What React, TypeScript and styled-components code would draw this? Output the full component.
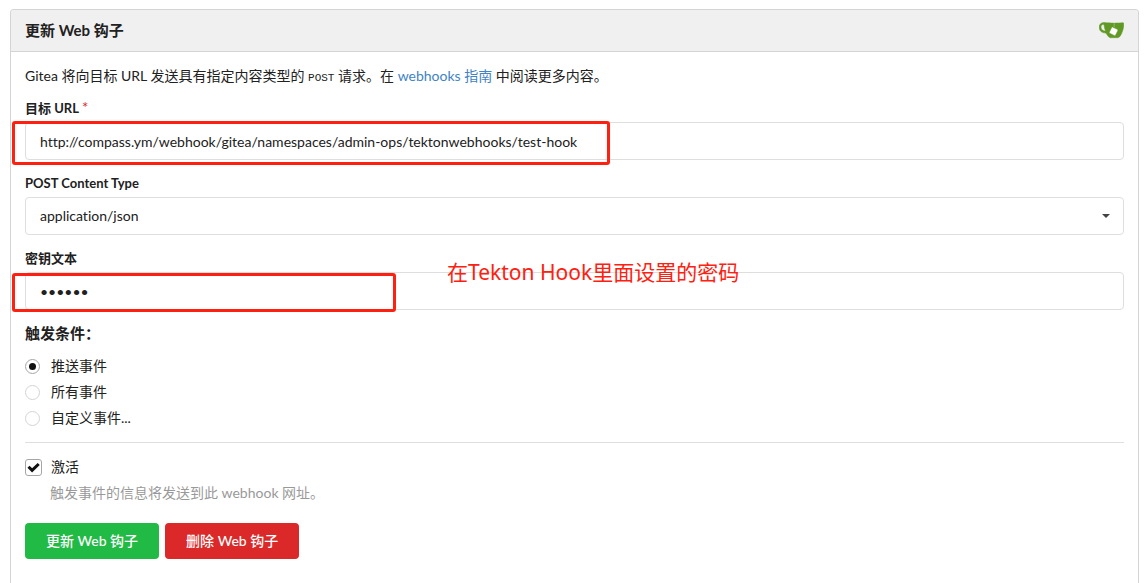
import React from "react";
import styled, { createGlobalStyle } from "styled-components";

const GlobalStyle = createGlobalStyle`
  *, *::before, *::after { box-sizing: border-box; }
  body {
    margin: 0;
    background: #fff;
    color: #212121;
    font-family: Lato, "Noto Sans CJK SC", sans-serif;
    font-size: 14px;
    font-variant-ligatures: none;
    line-height: 20px;
  }
  input, select, button { font: inherit; color: inherit; }
`;

const Page = styled.main`
  display: flex;
  flex-direction: column;
  min-height: 100vh;
  padding: 9px 7px 0 10px;
`;

const Card = styled.section`
  flex: 1;
  border: 1px solid #d4d4d5;
  border-bottom: 0;
  border-radius: 4px 4px 0 0;
`;

const CardHeader = styled.header`
  display: flex;
  align-items: center;
  justify-content: space-between;
  height: 42px;
  padding: 0 14px 2px;
  background: #f0f0f0;
  border-bottom: 1px solid #d4d4d5;
  border-radius: 3px 3px 0 0;
`;

const Title = styled.h1`
  margin: 0;
  font-size: 15px;
  font-weight: 700;
  line-height: 20px;
`;

const Logo = styled.svg`
  width: 25px;
  height: 25px;
`;

const Form = styled.form`
  padding: 14px;
`;

const Intro = styled.p`
  margin: 0 0 11px;
`;

const Code = styled.code`
  font-family: "Liberation Mono", monospace;
  font-size: 11px;
`;

const Link = styled.a`
  color: #4183c4;
  text-decoration: none;
`;

const Field = styled.div`
  margin-bottom: 14px;
`;

const Label = styled.label`
  display: block;
  margin-bottom: 4px;
  font-size: 13px;
  font-weight: 700;
  line-height: 19px;
`;

const Required = styled.span`
  margin-left: 3px;
  color: #db2828;
  font-size: 15px;
  font-weight: 400;
  line-height: 1;
`;

const Control = styled.div`
  position: relative;
`;

const Input = styled.input`
  display: block;
  width: 100%;
  height: 38px;
  padding: 0 14px;
  background: #fff;
  border: 1px solid #dededf;
  border-radius: 4px;
  outline: 0;
`;

const Select = styled.select`
  display: block;
  width: 100%;
  height: 38px;
  padding: 0 14px;
  appearance: none;
  background: #fff;
  border: 1px solid #dededf;
  border-radius: 4px;
`;

const Caret = styled.svg`
  position: absolute;
  top: 17px;
  right: 14px;
  width: 8px;
  height: 4px;
  pointer-events: none;
`;

const Highlight = styled.div<{ $width: number; $height: number; $top: number }>`
  position: absolute;
  top: ${(p) => p.$top}px;
  left: -13px;
  width: ${(p) => p.$width}px;
  height: ${(p) => p.$height}px;
  border: 3px solid #ff2010;
  border-radius: 3px;
  pointer-events: none;
`;

const Note = styled.span`
  position: absolute;
  top: -14px;
  left: 422px;
  color: #ff2010;
  font-family: "Noto Sans", "Noto Sans CJK SC", sans-serif;
  font-size: 21px;
  line-height: 28px;
  white-space: nowrap;
  pointer-events: none;
`;

const Events = styled.fieldset`
  margin: 0;
  padding: 0 0 14px;
  border: 0;
  border-bottom: 1px solid #dededf;
`;

const Legend = styled.legend`
  margin-bottom: 14px;
  padding: 0;
  font-size: 15px;
  font-weight: 700;
  line-height: 18px;
`;

const Option = styled.label`
  display: flex;
  align-items: center;
  gap: 11px;
  height: 20px;
  & + & { margin-top: 6px; }
`;

const Radio = styled.input`
  display: grid;
  place-content: center;
  width: 15px;
  height: 15px;
  margin: 0;
  appearance: none;
  background: #fff;
  border: 1px solid #d4d4d5;
  border-radius: 50%;
  &:checked { border-color: #a6a6a6; }
  &:checked::before {
    content: "";
    width: 7px;
    height: 7px;
    background: #111;
    border-radius: 50%;
  }
`;

const CheckRow = styled.label`
  display: flex;
  align-items: center;
  gap: 9px;
  height: 20px;
  margin-top: 14px;
`;

const CheckBox = styled.span`
  display: grid;
  width: 17px;
  height: 17px;
  & > * { grid-area: 1 / 1; }
`;

const Check = styled.input`
  width: 17px;
  height: 17px;
  margin: 0;
  appearance: none;
  background: #fff;
  border: 1px solid #a6a6a6;
  border-radius: 3px;
  & + svg { visibility: hidden; }
  &:checked + svg { visibility: visible; }
`;

const Tick = styled.svg`
  width: 17px;
  height: 17px;
  pointer-events: none;
`;

const Help = styled.p`
  margin: 6px 0 20px;
  padding-left: 25px;
  color: #999;
`;

const Actions = styled.div`
  display: flex;
  gap: 6px;
`;

const Button = styled.button<{ $color: string }>`
  height: 36px;
  padding: 0 21px;
  background: ${(p) => p.$color};
  border: 0;
  border-radius: 4px;
  color: #fff;
  font-weight: 500;
  cursor: pointer;
`;

const EVENTS = [
  { value: "push", text: "推送事件" },
  { value: "all", text: "所有事件" },
  { value: "custom", text: "自定义事件..." },
];

function GiteaLogo() {
  return (
    <Logo viewBox="0 0 640 640" role="img" aria-label="Gitea">
      <path
        fill="#fff"
        d="m395.9 484.2-126.9-61c-12.5-6-17.9-21.2-11.8-33.8l61-126.9c6-12.5 21.2-17.9 33.8-11.8 17.2 8.3 27.1 13 27.1 13l-.1-109.2 16.7-.1.1 117.1s57.4 24.2 83.1 40.1c3.7 2.3 10.2 6.8 12.9 14.4 2.1 6.1 2 13.1-1 19.3l-61 126.9c-6.2 12.7-21.4 18.1-33.9 12z"
      />
      <path
        fill="#609926"
        stroke="#609926"
        strokeWidth="12"
        d="M622.7 149.8c-4.1-4.1-9.6-4-9.6-4s-117.2 6.6-177.9 8c-13.3.3-26.5.6-39.6.7v117.2c-5.5-2.6-11.1-5.3-16.6-7.9 0-36.4-.1-109.2-.1-109.2-29 .4-89.2-2.2-89.2-2.2s-141.4-7.1-156.8-8.5c-9.8-.6-22.5-2.1-39 1.5-8.7 1.8-33.5 7.4-53.8 26.9C-4.9 212.4 6.6 276.2 8 285.8c1.7 11.7 6.9 44.2 31.7 72.5 45.8 56.1 144.4 54.8 144.4 54.8s12.1 28.9 30.6 55.5c25 33.1 50.7 58.9 75.7 62 63 0 188.9-.1 188.9-.1s12 .1 28.3-10.3c14-8.5 26.5-23.4 26.5-23.4S547 483 565 451.5c5.5-9.7 10.1-19.1 14.1-28 0 0 55.2-117.1 55.2-231.1-1.1-34.5-9.6-40.6-11.6-42.6zM125.6 353.9c-25.9-8.5-36.9-18.7-36.9-18.7S69.6 321.8 60 295.4c-16.5-44.2-1.4-71.2-1.4-71.2s8.4-22.5 38.5-30c13.8-3.7 31-3.1 31-3.1s7.1 59.4 15.7 94.2c7.2 29.2 24.8 77.7 24.8 77.7s-26.1-3.1-43-9.1zm300.3 107.6s-6.1 14.5-19.6 15.4c-5.8.4-10.3-1.2-10.3-1.2s-.3-.1-5.3-2.1l-112.9-55s-10.9-5.7-12.8-15.6c-2.2-8.1 2.7-18.1 2.7-18.1L322 273s4.8-9.7 12.2-13c.6-.3 2.3-1 4.5-1.5 8.1-2.1 18 2.8 18 2.8L467.4 315s12.6 5.7 15.3 16.2c1.9 7.4-.5 14-1.8 17.2-6.3 15.4-55 113.1-55 113.1z"
      />
    </Logo>
  );
}

export default function App() {
  return (
    <>
      <GlobalStyle />
      <Page>
        <Card>
          <CardHeader>
            <Title>更新 Web 钩子</Title>
            <GiteaLogo />
          </CardHeader>
          <Form onSubmit={(e) => e.preventDefault()}>
            <Intro>
              Gitea 将向目标 URL 发送具有指定内容类型的 <Code>POST</Code> 请求。在{" "}
              <Link href="#webhooks">webhooks 指南</Link> 中阅读更多内容。
            </Intro>

            <Field>
              <Label htmlFor="url">
                目标 URL<Required>*</Required>
              </Label>
              <Control>
                <Input
                  id="url"
                  type="text"
                  required
                  defaultValue="http://compass.ym/webhook/gitea/namespaces/admin-ops/tektonwebhooks/test-hook"
                />
                <Highlight $top={-1} $width={598} $height={44} />
              </Control>
            </Field>

            <Field>
              <Label htmlFor="type">POST Content Type</Label>
              <Control>
                <Select id="type" defaultValue="json">
                  <option value="json">application/json</option>
                  <option value="form">application/x-www-form-urlencoded</option>
                </Select>
                <Caret viewBox="0 0 8 4" aria-hidden="true">
                  <path d="M0 0h8L4 4z" fill="#444" />
                </Caret>
              </Control>
            </Field>

            <Field>
              <Label htmlFor="secret">密钥文本</Label>
              <Control>
                <Input id="secret" type="password" defaultValue="secret" />
                <Highlight $top={1} $width={384} $height={39} />
                <Note>在Tekton Hook里面设置的密码</Note>
              </Control>
            </Field>

            <Events>
              <Legend>触发条件：</Legend>
              {EVENTS.map((event, i) => (
                <Option key={event.value}>
                  <Radio type="radio" name="events" value={event.value} defaultChecked={i === 0} />
                  {event.text}
                </Option>
              ))}
            </Events>

            <CheckRow>
              <CheckBox>
                <Check type="checkbox" defaultChecked />
                <Tick viewBox="0 0 17 17" aria-hidden="true">
                  <path d="M3.5 7.8l3.6 3.6 6.6-6.4" fill="none" stroke="#111" strokeWidth="3" />
                </Tick>
              </CheckBox>
              激活
            </CheckRow>
            <Help>触发事件的信息将发送到此 webhook 网址。</Help>

            <Actions>
              <Button type="submit" $color="#21ba45">更新 Web 钩子</Button>
              <Button type="button" $color="#db2828">删除 Web 钩子</Button>
            </Actions>
          </Form>
        </Card>
      </Page>
    </>
  );
}
